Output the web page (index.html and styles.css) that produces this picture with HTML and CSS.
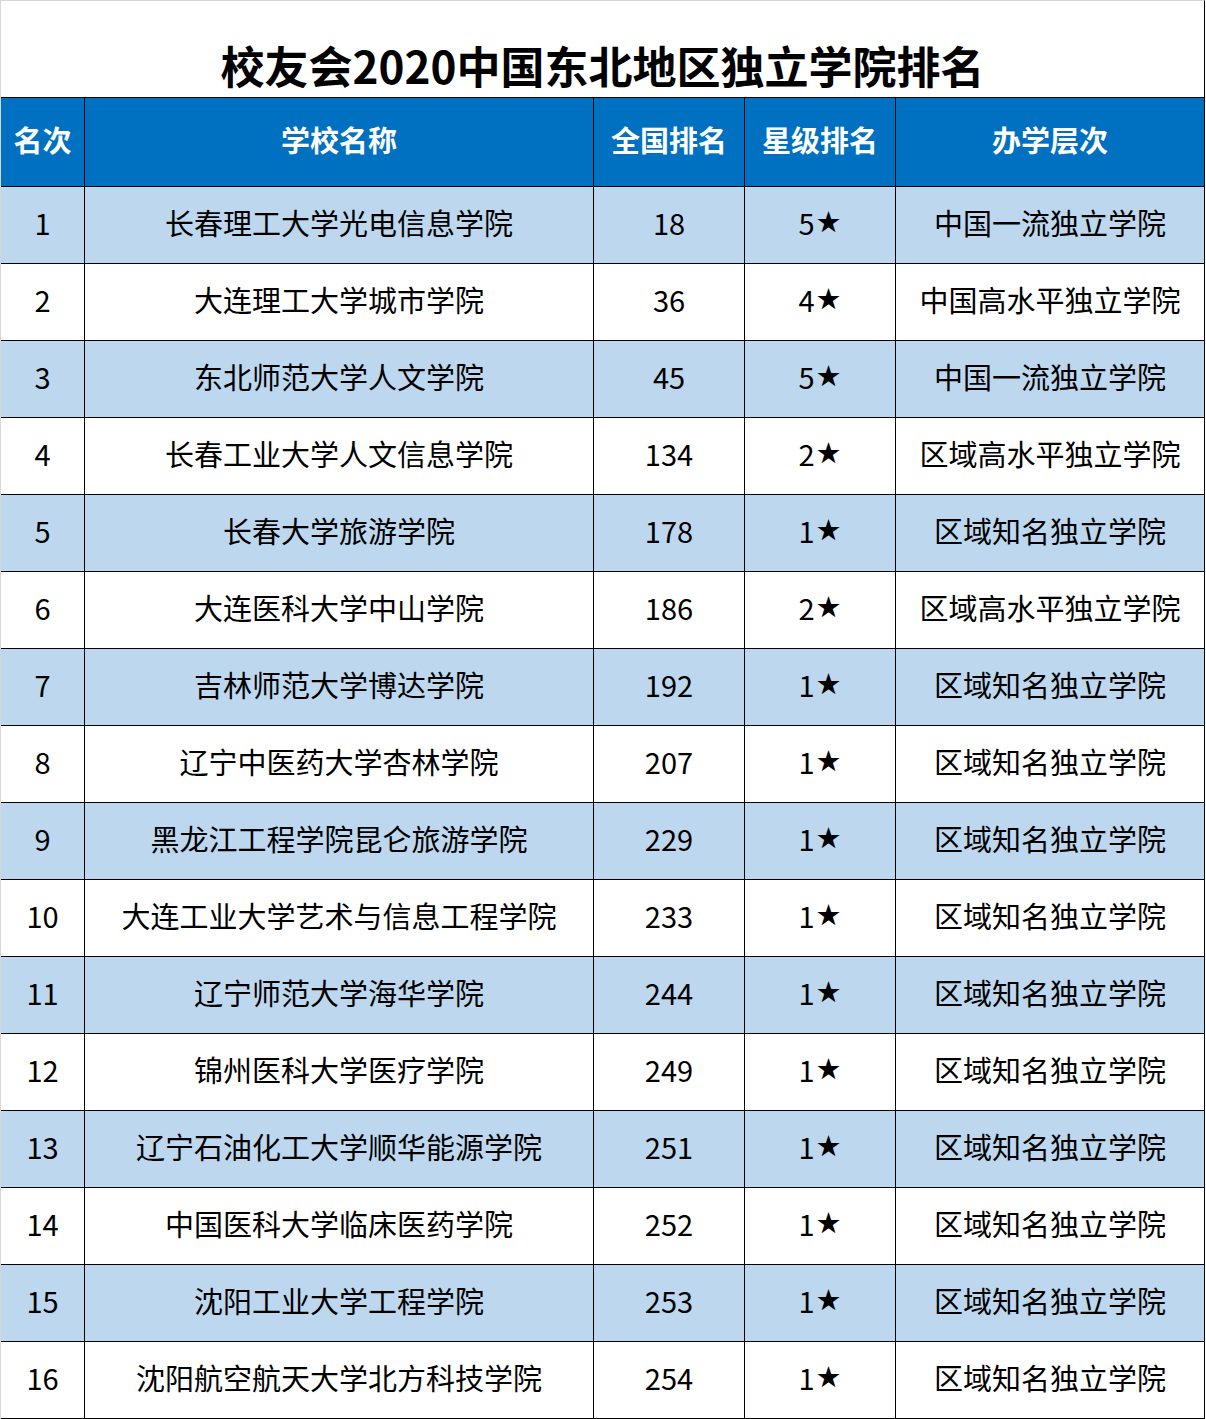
FILE: index.html
```html
<!DOCTYPE html>
<html lang="zh-CN">
<head>
<meta charset="utf-8">
<title>校友会2020中国东北地区独立学院排名</title>
<link rel="stylesheet" href="styles.css">
</head>
<body>
<div class="sheet">
  <div class="title">校友会2020中国东北地区独立学院排名</div>
  <div class="grid">
    <div class="hd">名次</div><div class="hd">学校名称</div><div class="hd">全国排名</div><div class="hd">星级排名</div><div class="hd">办学层次</div>

    <div class="c alt">1</div><div class="c alt">长春理工大学光电信息学院</div><div class="c alt">18</div><div class="c alt">5<span class="star">★</span></div><div class="c alt">中国一流独立学院</div>
    <div class="c">2</div><div class="c">大连理工大学城市学院</div><div class="c">36</div><div class="c">4<span class="star">★</span></div><div class="c">中国高水平独立学院</div>
    <div class="c alt">3</div><div class="c alt">东北师范大学人文学院</div><div class="c alt">45</div><div class="c alt">5<span class="star">★</span></div><div class="c alt">中国一流独立学院</div>
    <div class="c">4</div><div class="c">长春工业大学人文信息学院</div><div class="c">134</div><div class="c">2<span class="star">★</span></div><div class="c">区域高水平独立学院</div>
    <div class="c alt">5</div><div class="c alt">长春大学旅游学院</div><div class="c alt">178</div><div class="c alt">1<span class="star">★</span></div><div class="c alt">区域知名独立学院</div>
    <div class="c">6</div><div class="c">大连医科大学中山学院</div><div class="c">186</div><div class="c">2<span class="star">★</span></div><div class="c">区域高水平独立学院</div>
    <div class="c alt">7</div><div class="c alt">吉林师范大学博达学院</div><div class="c alt">192</div><div class="c alt">1<span class="star">★</span></div><div class="c alt">区域知名独立学院</div>
    <div class="c">8</div><div class="c">辽宁中医药大学杏林学院</div><div class="c">207</div><div class="c">1<span class="star">★</span></div><div class="c">区域知名独立学院</div>
    <div class="c alt">9</div><div class="c alt">黑龙江工程学院昆仑旅游学院</div><div class="c alt">229</div><div class="c alt">1<span class="star">★</span></div><div class="c alt">区域知名独立学院</div>
    <div class="c">10</div><div class="c">大连工业大学艺术与信息工程学院</div><div class="c">233</div><div class="c">1<span class="star">★</span></div><div class="c">区域知名独立学院</div>
    <div class="c alt">11</div><div class="c alt">辽宁师范大学海华学院</div><div class="c alt">244</div><div class="c alt">1<span class="star">★</span></div><div class="c alt">区域知名独立学院</div>
    <div class="c">12</div><div class="c">锦州医科大学医疗学院</div><div class="c">249</div><div class="c">1<span class="star">★</span></div><div class="c">区域知名独立学院</div>
    <div class="c alt">13</div><div class="c alt">辽宁石油化工大学顺华能源学院</div><div class="c alt">251</div><div class="c alt">1<span class="star">★</span></div><div class="c alt">区域知名独立学院</div>
    <div class="c">14</div><div class="c">中国医科大学临床医药学院</div><div class="c">252</div><div class="c">1<span class="star">★</span></div><div class="c">区域知名独立学院</div>
    <div class="c alt">15</div><div class="c alt">沈阳工业大学工程学院</div><div class="c alt">253</div><div class="c alt">1<span class="star">★</span></div><div class="c alt">区域知名独立学院</div>
    <div class="c">16</div><div class="c">沈阳航空航天大学北方科技学院</div><div class="c">254</div><div class="c">1<span class="star">★</span></div><div class="c">区域知名独立学院</div>
  </div>
</div>
</body>
</html>
```

FILE: styles.css
```css
html, body {
  margin: 0;
  padding: 0;
  background: #ffffff;
}

body {
  font-family: "Noto Sans CJK SC", "Noto Sans", sans-serif;
  color: #000;
}

.sheet {
  width: 1205px;
  box-sizing: border-box;
  border-top: 1px solid #d6d6d6;
  border-left: 1px solid #d6d6d6;
  border-right: 1px solid #000;
  display: flex;
  flex-direction: column;
}

.title {
  height: 96px;
  box-sizing: border-box;
  display: flex;
  align-items: flex-end;
  justify-content: center;
  padding-bottom: 10px;
  font-size: 44px;
  line-height: 44px;
  font-weight: 700;
}

.grid {
  display: grid;
  grid-template-columns: 83px 508px 150px 150px 308px;
  grid-template-rows: 88px repeat(16, 76px);
  gap: 1px;
  background: #000;
  border-top: 1px solid #000;
  border-bottom: 1px solid #000;
}

.hd {
  background: #0070c0;
  color: #fff;
  font-weight: 700;
  font-size: 29px;
  display: flex;
  align-items: center;
  justify-content: center;
  white-space: nowrap;
  box-sizing: border-box;
  padding-bottom: 6px;
}

.c {
  background: #fff;
  font-size: 29px;
  display: flex;
  align-items: center;
  justify-content: center;
  white-space: nowrap;
  box-sizing: border-box;
  padding-bottom: 6px;
}

.c.alt {
  background: #bdd7ee;
}

.star {
  font-family: "DejaVu Sans", sans-serif;
  font-size: 29px;
  margin-left: 1px;
  vertical-align: -2px;
}
```
